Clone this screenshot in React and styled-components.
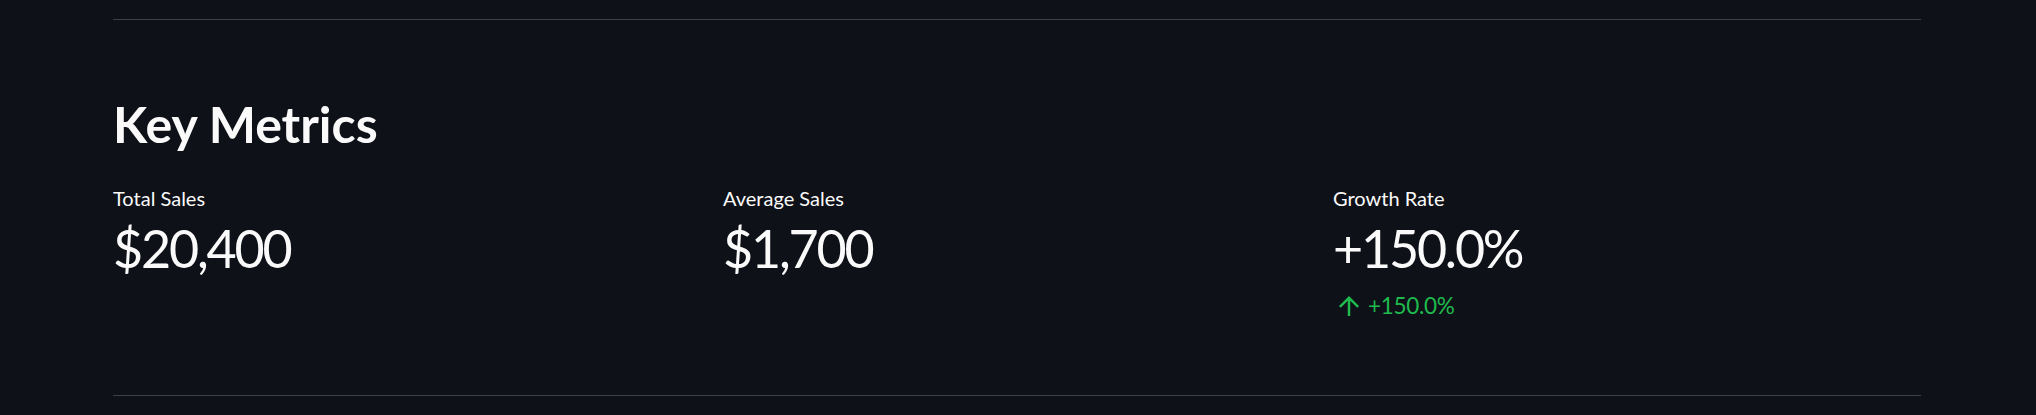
import styled, { createGlobalStyle } from "styled-components";

const GlobalStyle = createGlobalStyle`
  html, body {
    margin: 0;
    padding: 0;
    background: #0e1117;
  }
  body {
    font-family: Lato, "Noto Sans", sans-serif;
    color: #fafafa;
  }
`;

const metrics = [
  { label: "Total Sales", value: "$20,400" },
  { label: "Average Sales", value: "$1,700" },
  { label: "Growth Rate", value: "+150.0%", delta: "+150.0%" },
];

const ArrowUp = () => (
  <svg width="30" height="30" viewBox="0 0 24 24" fill="currentColor">
    <path d="M4 12l1.41 1.41L11 7.83V20h2V7.83l5.58 5.59L20 12l-8-8-8 8z" />
  </svg>
);

const App = () => {
  return (
    <Page>
      <GlobalStyle />
      <Main>
        <Divider />
        <Heading>Key Metrics</Heading>
        <Columns>
          {metrics.map((m) => (
            <Metric key={m.label}>
              <Label>{m.label}</Label>
              <Value>{m.value}</Value>
              {m.delta && (
                <Delta>
                  <ArrowUp />
                  <span>{m.delta}</span>
                </Delta>
              )}
            </Metric>
          ))}
        </Columns>
        <Divider />
      </Main>
    </Page>
  );
};

const Page = styled.div`
  width: 2036px;
  height: 415px;
  overflow: hidden;
  background: #0e1117;
`;

const Main = styled.main`
  width: 1808px;
  margin-left: 113px;
  padding-top: 19px;
  display: flex;
  flex-direction: column;
`;

const Divider = styled.hr`
  margin: 0;
  border: none;
  border-top: 1px solid rgba(250, 250, 250, 0.2);
  height: 0;
  width: 100%;
`;

const Heading = styled.h2`
  margin: 74px 0 0 0;
  font-size: 50px;
  font-weight: 700;
  line-height: 61px;
`;

const Columns = styled.div`
  display: grid;
  grid-template-columns: repeat(3, 1fr);
  column-gap: 22px;
  margin-top: 31px;
  height: 209px;
`;

const Metric = styled.div`
  display: flex;
  flex-direction: column;
`;

const Label = styled.div`
  font-size: 20px;
  line-height: 1.2;
`;

const Value = styled.div`
  margin-top: 7px;
  font-size: 52px;
  line-height: 1.2;
  letter-spacing: -2.2px;
`;

const Delta = styled.div`
  margin-top: 12px;
  height: 30px;
  display: flex;
  align-items: center;
  gap: 4px;
  color: #1fbb4e;
  font-size: 22.5px;
  line-height: 30px;
  letter-spacing: -0.3px;

  svg {
    flex-shrink: 0;
    margin-left: 1px;
  }
`;

export default App;
